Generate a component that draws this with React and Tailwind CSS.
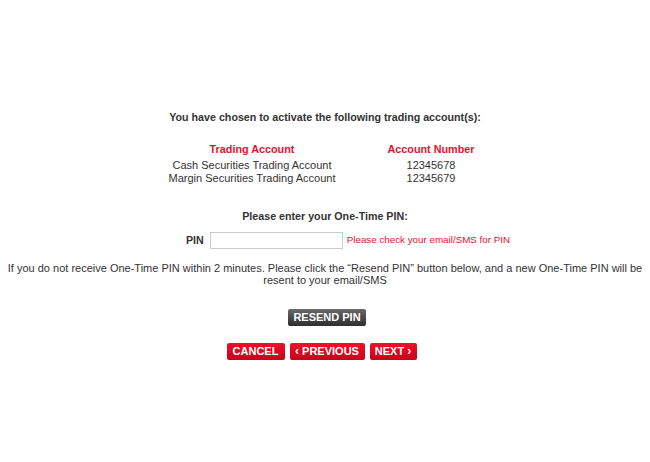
import { useState } from 'react';

const accounts = [
  { name: 'Cash Securities Trading Account', number: '12345678' },
  { name: 'Margin Securities Trading Account', number: '12345679' },
];

const redBtn =
  'h-[17px] rounded-[2px] bg-gradient-to-b from-[#f0102a] to-[#c8001a] text-white font-bold text-[11px] leading-[17px] whitespace-nowrap flex items-center justify-center';

export default function App() {
  const [pin, setPin] = useState('');

  return (
    <div className="min-h-[462px] bg-white text-[#333] font-['Liberation_Sans',Arial,sans-serif] text-[11px] pt-[110px]">
      <h2 className="text-center font-bold text-[10.7px] leading-[14px]">
        You have chosen to activate the following trading account(s):
      </h2>

      <table className="mx-auto mt-[18px] w-[358px] border-collapse">
        <thead>
          <tr className="text-[#e8112d] font-bold text-[10.8px] leading-[14px]">
            <th className="w-[212px] text-center font-bold pb-[3px]">Trading Account</th>
            <th className="text-center font-bold pb-[3px]">Account Number</th>
          </tr>
        </thead>
        <tbody>
          {accounts.map((a) => (
            <tr key={a.number} className="text-[#333]">
              <td className="text-center h-[13px] leading-[13px] p-0">{a.name}</td>
              <td className="text-center h-[13px] leading-[13px] p-0">{a.number}</td>
            </tr>
          ))}
        </tbody>
      </table>

      <p className="text-center font-bold text-[10.7px] leading-[14px] mt-[24px]">Please enter your One-Time PIN:</p>

      <div className="flex items-center justify-center pl-[46px] mt-[9px]">
        <label className="font-bold text-[10.7px] mr-[6px]">PIN</label>
        <input
          value={pin}
          onChange={(e) => setPin(e.target.value)}
          className="w-[133px] h-[17px] border border-[#ccc] bg-white outline-none px-1 text-[11px]"
        />
        <span className="ml-[4px] text-[#e8112d] text-[9.8px]">Please check your email/SMS for PIN</span>
      </div>

      <p className="text-center px-[2px] mt-[13px] leading-[12px]">
        If you do not receive One-Time PIN within 2 minutes. Please click the “Resend PIN” button below, and a new One-Time PIN will be resent to your email/SMS
      </p>

      <div className="flex justify-center mt-[23px] pl-[4px]">
        <button className="h-[17px] w-[78px] rounded-[2px] bg-gradient-to-b from-[#6a6a6a] to-[#2e2e2e] text-white font-bold text-[11px] leading-[17px] whitespace-nowrap">
          RESEND PIN
        </button>
      </div>

      <div className="flex justify-center gap-[5px] mt-[17px] pr-[7px]">
        <button className={`${redBtn} w-[58px]`}>CANCEL</button>
        <button className={`${redBtn} w-[75px] gap-[3px]`}>
          <span className="text-[12px]">‹</span>PREVIOUS
        </button>
        <button className={`${redBtn} w-[47px] gap-[3px]`}>
          NEXT<span className="text-[12px]">›</span>
        </button>
      </div>
    </div>
  );
}
